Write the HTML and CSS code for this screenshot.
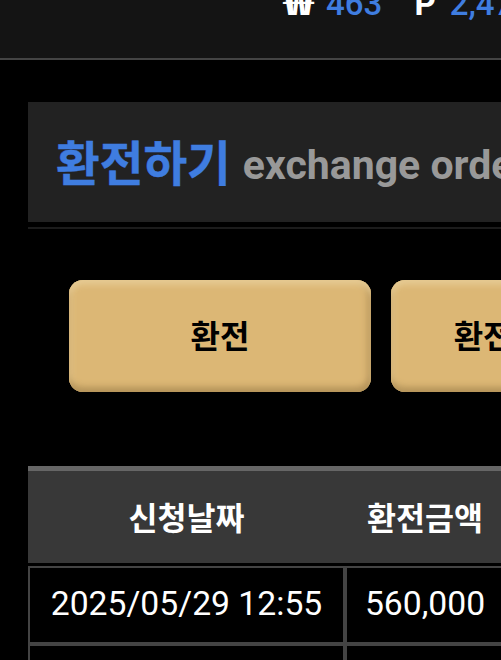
FILE: index.html
```html
<!DOCTYPE html>
<html lang="ko">
<head>
<meta charset="utf-8">
<title>환전하기</title>
<link rel="stylesheet" href="styles.css">
</head>
<body>
<div class="page">
  <header class="topbar">
    <div class="balances">
      <span class="cur cur-w">₩</span><span class="val">463</span>
      <span class="cur cur-p">P</span><span class="val">2,470</span>
    </div>
  </header>
  <main class="content">
    <section class="title-box">
      <h1 class="title"><span class="title-ko">환전하기</span><span class="title-en">exchange order</span></h1>
    </section>
    <div class="title-rule"></div>
    <div class="tabs">
      <button class="tab">환전</button>
      <button class="tab">환전신청내역</button>
    </div>
    <table class="grid">
      <thead>
        <tr><th class="c1">신청날짜</th><th class="c2">환전금액</th><th class="c3">상태</th></tr>
      </thead>
      <tbody>
        <tr><td>2025/05/29 12:55</td><td>560,000</td><td>완료</td></tr>
        <tr><td>2025/05/28 18:20</td><td>300,000</td><td>완료</td></tr>
      </tbody>
    </table>
  </main>
</div>
</body>
</html>
```
FILE: styles.css
```css
* { box-sizing: border-box; }
html, body { margin: 0; padding: 0; background: #000; }
body { font-family: Roboto, "Noto Sans CJK KR", sans-serif; color: #fff; overflow: hidden; }
.page { width: 501px; height: 660px; overflow: hidden; }
.topbar { height: 60px; background: #141414; border-bottom: 2px solid #444; overflow: hidden; }
.balances { display: flex; align-items: baseline; white-space: nowrap; margin-top: -16px; padding-left: 284px; height: 34px; font-size: 33px; font-weight: 500; line-height: 34px; }
.cur { color: #fff; font-weight: 700; margin-right: 15px; }
.cur-w { font-family: "Noto Sans CJK KR", sans-serif; font-size: 33px; margin-right: 22px; font-weight: 900; transform: scaleX(1.45); transform-origin: left center; }
.cur-p { margin-left: 32px; margin-right: 14px; }
.val { color: #3f7de0; }
.content { padding: 42px 0 0 28px; width: 800px; }
.title-box { height: 120px; background: #222; display: flex; align-items: center; padding-left: 28px; }
.title { margin: 0; display: flex; align-items: center; white-space: nowrap; font-weight: 700; }
.title-ko { font-size: 47.5px; color: #3f7de0; line-height: 56px; margin-top: 6px; -webkit-text-stroke: 0.4px #3f7de0; }
.title-en { font-size: 41px; color: #999; margin-left: 12px; font-weight: 700; line-height: 56px; margin-top: 5px; }
.title-rule { height: 2px; margin-top: 5px; background: #1c1c1c; }
.tabs { display: flex; gap: 20px; padding: 51px 0 0 41px; }
.tab { width: 302px; height: 112px; flex: none; border: 0; border-radius: 14px; background: #dcb775; box-shadow: inset 0 7px 6px -2px #e6ca92, inset 0 -6px 6px -1px #b5945a, inset 6px 0 6px -2px #e0c084, inset -6px 0 6px -2px #bf9d63; color: #000; font-family: Roboto, "Noto Sans CJK KR", sans-serif; font-size: 32px; font-weight: 700; padding: 0 0 4px; }
.grid { margin-top: 74px; border-collapse: separate; border-spacing: 0; table-layout: fixed; width: 700px; }
.grid th { height: 100px; background: #383838; border-top: 5px solid #666; border-bottom: 3px solid #000; font-size: 31.5px; font-weight: 700; color: #fff; padding: 0 0 3px; }
.c1 { width: 317px; }
.c2 { width: 160px; }
.grid td { height: 78px; border: 2px solid #444; background: #000; text-align: center; font-size: 33.7px; font-weight: 400; color: #fff; padding: 0 0 3px; }
```
